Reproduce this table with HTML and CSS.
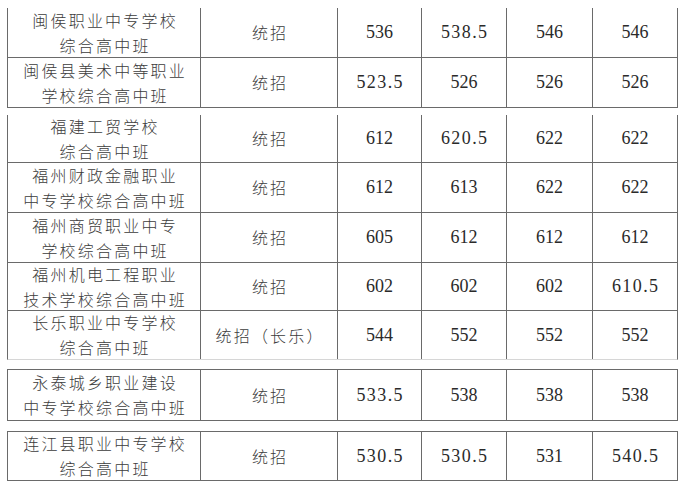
FILE: index.html
```html
<!DOCTYPE html>
<html lang="zh-CN">
<head>
<meta charset="utf-8">
<title>综合高中班录取分数</title>
<link rel="stylesheet" href="styles.css">
</head>
<body>
<div class="page">
  <div class="seg seg1">
    <div class="cell name">闽侯职业中专学校<br>综合高中班</div>
    <div class="cell kind">统招</div>
    <div class="cell num">536</div>
    <div class="cell num dec">538.5</div>
    <div class="cell num">546</div>
    <div class="cell num">546</div>

    <div class="cell name">闽侯县美术中等职业<br>学校综合高中班</div>
    <div class="cell kind">统招</div>
    <div class="cell num dec">523.5</div>
    <div class="cell num">526</div>
    <div class="cell num">526</div>
    <div class="cell num">526</div>
  </div>

  <div class="seg seg2">
    <div class="cell name">福建工贸学校<br>综合高中班</div>
    <div class="cell kind">统招</div>
    <div class="cell num">612</div>
    <div class="cell num dec">620.5</div>
    <div class="cell num">622</div>
    <div class="cell num">622</div>

    <div class="cell name">福州财政金融职业<br>中专学校综合高中班</div>
    <div class="cell kind">统招</div>
    <div class="cell num">612</div>
    <div class="cell num">613</div>
    <div class="cell num">622</div>
    <div class="cell num">622</div>

    <div class="cell name">福州商贸职业中专<br>学校综合高中班</div>
    <div class="cell kind">统招</div>
    <div class="cell num">605</div>
    <div class="cell num">612</div>
    <div class="cell num">612</div>
    <div class="cell num">612</div>

    <div class="cell name">福州机电工程职业<br>技术学校综合高中班</div>
    <div class="cell kind">统招</div>
    <div class="cell num">602</div>
    <div class="cell num">602</div>
    <div class="cell num">602</div>
    <div class="cell num dec">610.5</div>

    <div class="cell name">长乐职业中专学校<br>综合高中班</div>
    <div class="cell kind">统招（长乐）</div>
    <div class="cell num">544</div>
    <div class="cell num">552</div>
    <div class="cell num">552</div>
    <div class="cell num">552</div>
  </div>

  <div class="seg seg3">
    <div class="cell name">永泰城乡职业建设<br>中专学校综合高中班</div>
    <div class="cell kind">统招</div>
    <div class="cell num dec">533.5</div>
    <div class="cell num">538</div>
    <div class="cell num">538</div>
    <div class="cell num">538</div>
  </div>

  <div class="seg seg4">
    <div class="cell name">连江县职业中专学校<br>综合高中班</div>
    <div class="cell kind">统招</div>
    <div class="cell num dec">530.5</div>
    <div class="cell num dec">530.5</div>
    <div class="cell num">531</div>
    <div class="cell num dec">540.5</div>
  </div>
</div>
</body>
</html>
```

FILE: styles.css
```css
html, body {
  margin: 0;
  padding: 0;
  background: #ffffff;
}

.page {
  width: 685px;
  height: 488px;
  padding: 8px 0 0 7px;
  box-sizing: border-box;
  overflow: hidden;
}

.seg {
  display: grid;
  grid-template-columns: 192px 136px 83px 84px 85px 84px;
  column-gap: 1px;
  row-gap: 1px;
  width: 671px;
  box-sizing: border-box;
  background: #6a6a6a;
  border-left: 1px solid #6a6a6a;
  border-right: 1px solid #6a6a6a;
  border-bottom: 1px solid #6a6a6a;
}

.seg1 {
  grid-template-rows: 49px 49px;
}

.seg2 {
  margin-top: 7px;
  grid-template-rows: 47px 49px 49px 47px 48px;
  border-bottom-color: #d6d6d6;
}

.seg3 {
  margin-top: 9px;
  grid-template-rows: 50px;
  border-top: 1px solid #6a6a6a;
}

.seg4 {
  margin-top: 10px;
  grid-template-rows: 48px;
  border-top: 1px solid #6a6a6a;
}

.cell {
  background: #ffffff;
  display: flex;
  align-items: center;
  justify-content: center;
  text-align: center;
  overflow: hidden;
}

.name,
.kind {
  font-family: "Noto Sans CJK SC", "Noto Sans", sans-serif;
  font-weight: 300;
  font-size: 16px;
  line-height: 25px;
  letter-spacing: 2.2px;
  padding-left: 2.2px;
  color: #3c3c3c;
}

.num {
  font-family: "Liberation Serif", "DejaVu Serif", serif;
  font-size: 18px;
  color: #2a2a2a;
}

.dec {
  letter-spacing: 1.4px;
  padding-left: 1.4px;
}
```
